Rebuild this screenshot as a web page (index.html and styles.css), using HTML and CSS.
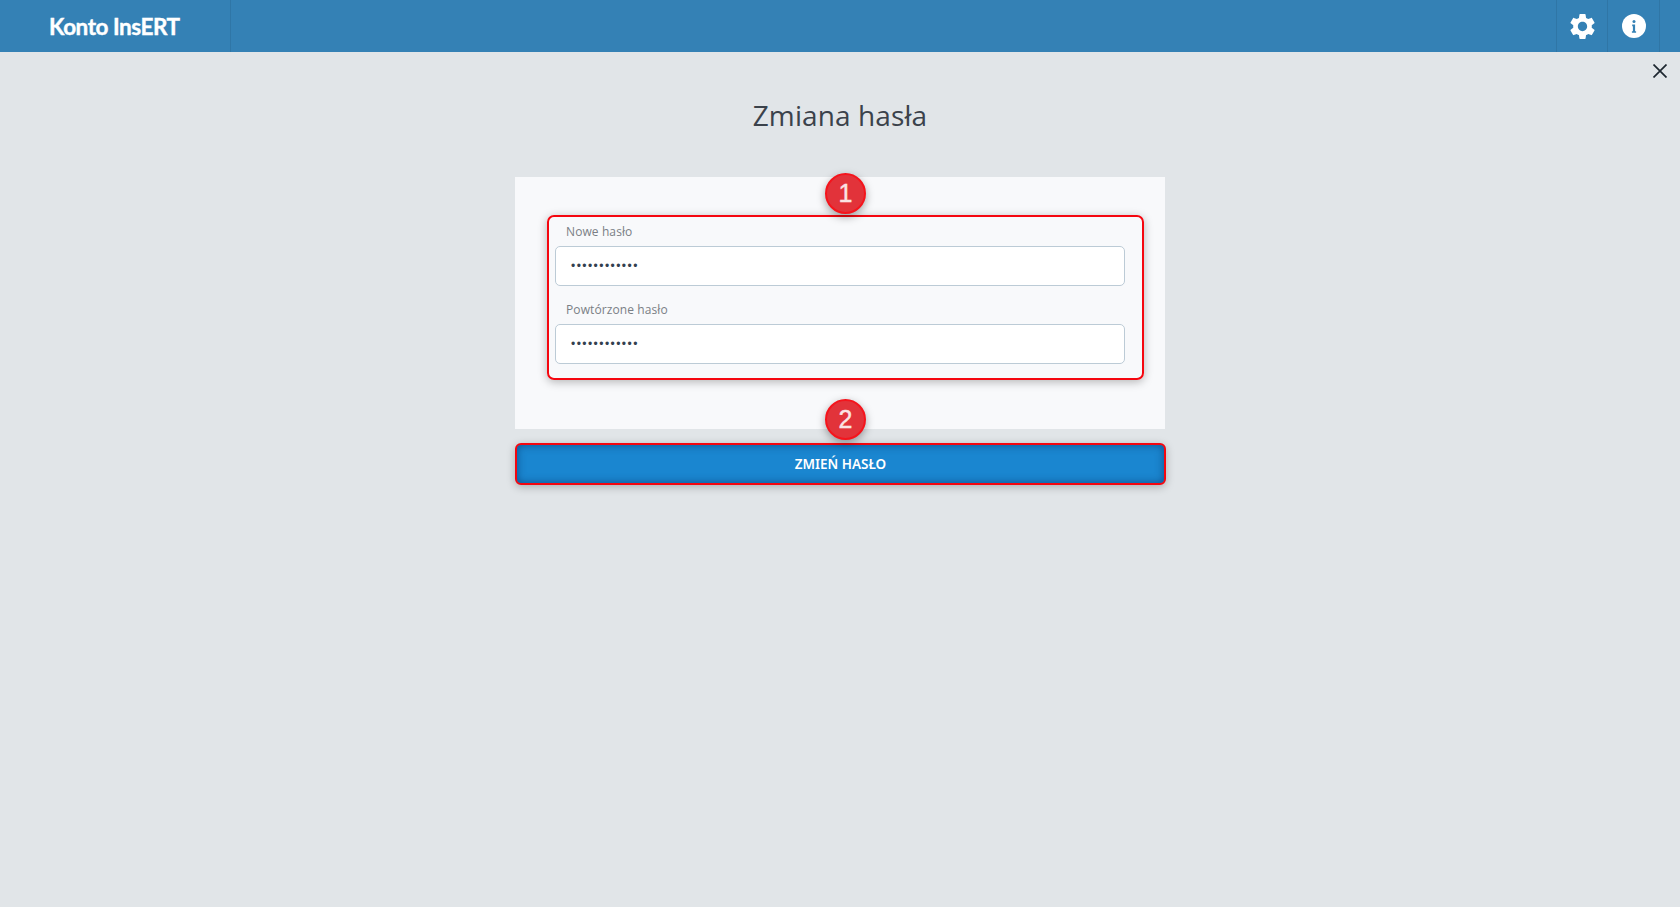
FILE: index.html
```html
<!doctype html>
<html lang="pl">
<head>
  <meta charset="utf-8">
  <meta name="viewport" content="width=device-width,initial-scale=1">
  <title>Zmiana hasła</title>
  <link rel="stylesheet" href="styles.css">
</head>
<body>
  <header class="topbar">
    <div class="brand">Konto InsERT</div>
    <div class="spacer"></div>
    <a class="bar-btn" href="#" aria-label="Ustawienia">
      <svg class="gear" viewBox="0 0 24 24"><path d="M19.14 12.94c.04-.3.06-.61.06-.94 0-.32-.02-.64-.07-.94l2.03-1.58c.18-.14.23-.41.12-.61l-1.92-3.32c-.12-.22-.37-.29-.59-.22l-2.39.96c-.5-.38-1.03-.7-1.62-.94l-.36-2.54c-.04-.24-.24-.41-.48-.41h-3.84c-.24 0-.43.17-.47.41l-.36 2.54c-.59.24-1.13.57-1.62.94l-2.39-.96c-.22-.08-.47 0-.59.22L2.74 8.87c-.12.21-.08.47.12.61l2.03 1.58c-.05.3-.09.63-.09.94s.02.64.07.94l-2.03 1.58c-.18.14-.23.41-.12.61l1.92 3.32c.12.22.37.29.59.22l2.39-.96c.5.38 1.03.7 1.62.94l.36 2.54c.05.24.24.41.48.41h3.84c.24 0 .44-.17.47-.41l.36-2.54c.59-.24 1.13-.56 1.62-.94l2.39.96c.22.08.47 0 .59-.22l1.92-3.32c.12-.22.07-.47-.12-.61l-2.01-1.58zM12 15.6c-1.98 0-3.6-1.62-3.6-3.6s1.62-3.6 3.6-3.6 3.6 1.62 3.6 3.6-1.62 3.6-3.6 3.6z"/></svg>
    </a>
    <a class="bar-btn" href="#" aria-label="Informacje">
      <svg class="info" viewBox="0 0 24 24"><circle cx="12" cy="12" r="12" fill="#fff"/><circle cx="12" cy="7.4" r="1.5" fill="#3481b5"/><path d="M10.2 10.6h2.9v6.6h1v1.6h-4.2v-1.6h1v-5h-.7z" fill="#3481b5"/></svg>
    </a>
    <div class="bar-end"></div>
  </header>

  <main class="page">
    <a class="close" href="#" aria-label="Zamknij">
      <svg viewBox="0 0 14 14"><path d="M.5.5l13 13M13.500.5l-13 13"/></svg>
    </a>
    <h1>Zmiana hasła</h1>

    <div class="column">
      <form class="card">
        <span class="badge badge-one">1</span>
        <div class="fields">
          <label class="field">
            <span>Nowe hasło</span>
            <input type="password" value="kontoinsert1">
          </label>
          <label class="field">
            <span>Powtórzone hasło</span>
            <input type="password" value="kontoinsert1">
          </label>
        </div>
        <span class="badge badge-two">2</span>
      </form>
      <button class="submit" type="button">ZMIEŃ HASŁO</button>
    </div>
  </main>
</body>
</html>
```

FILE: styles.css
```css
*{box-sizing:border-box}
html,body{height:100%}
body{margin:0;background:#e1e5e8;color:#3b424b;font-family:"Open Sans","Noto Sans",Arial,sans-serif;overflow:hidden}

.topbar{display:flex;height:52px;background:#3481b5}
.brand{width:231px;padding-left:49px;border-right:1px solid #2f76a6;color:#fff;font-family:Lato,"Open Sans",sans-serif;font-size:22.5px;font-weight:700;line-height:54px;letter-spacing:-.45px;-webkit-text-stroke:.4px #fff}
.spacer{flex:1}
.bar-btn{display:flex;width:51px;align-items:center;justify-content:center;border-left:1px solid #2f76a6}
.bar-btn + .bar-btn{width:52px}
.bar-end{width:21px;border-left:1px solid #2f76a6}
.gear{width:31px;height:31px;fill:#fff}
.info{width:24px;height:24px}

.page{position:relative;padding-top:43px}
.close{position:absolute;top:12px;right:13px;width:14px;height:14px}
.close svg{display:block;width:14px;height:14px;fill:none;stroke:#1d2730;stroke-width:1.7}
h1{margin:0 0 42px;font-size:28px;font-weight:400;line-height:40px;letter-spacing:.1px;text-align:center}

.column{width:650px;margin:0 auto}
.card{position:relative;height:252px;padding:38px 21px 0 32px;background:#f8f9fb}
.fields{height:165px;padding:5px 17px 0 6px;border:2px solid #f5060f;border-radius:7px;box-shadow:0 2px 10px rgba(0,0,0,.28)}
.field{display:block}
.field + .field{margin-top:14px}
.field span{display:block;padding-left:11px;margin-bottom:4px;color:#7a7f85;font-size:12px;line-height:20px;letter-spacing:.1px}
.field input{display:block;width:100%;height:40px;padding:0 15px;border:1px solid #bccbd6;border-radius:5px;background:#fff;color:#33404f;font-family:"Liberation Sans",Arial,sans-serif;font-size:12px;letter-spacing:1.45px;outline:0}

.badge{position:absolute;left:310px;width:41px;height:41px;border:2px solid #f5141c;border-radius:50%;background:#e2333a;box-shadow:0 3px 8px rgba(0,0,0,.35);color:#fbe3e4;font-family:"Liberation Sans",Arial,sans-serif;font-size:25px;line-height:37px;text-align:center;-webkit-text-stroke:.4px #fbe3e4}
.badge-one{top:-4px}
.badge-two{top:222px}

.submit{display:block;width:651px;height:42px;margin-top:14px;border:2px solid #f5060f;border-radius:6px;background:#1a86d0;box-shadow:inset 0 0 8px rgba(0,40,90,.55),0 2px 9px rgba(0,0,0,.25);color:#fff;font-family:"Noto Sans","Open Sans",Arial,sans-serif;font-size:13.5px;font-weight:600}
```
